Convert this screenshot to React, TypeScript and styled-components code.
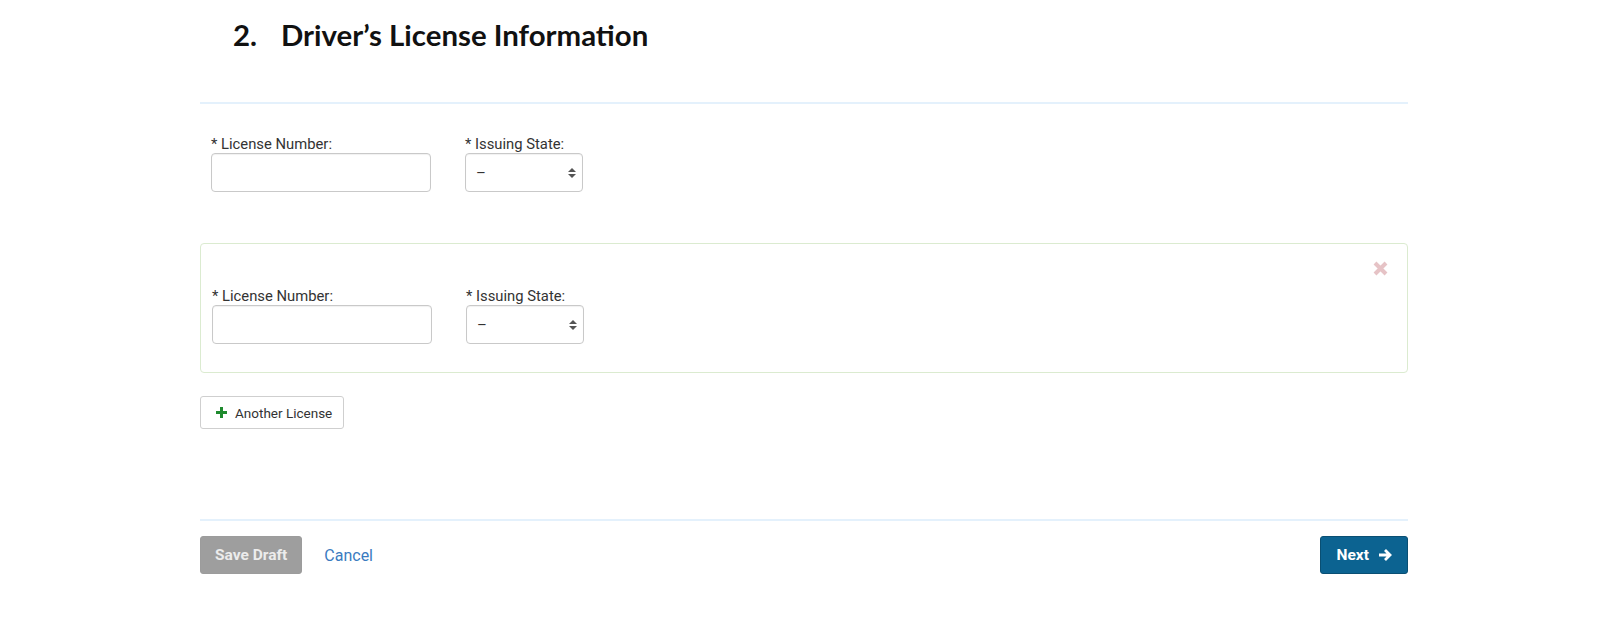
import React from 'react';
import styled, { createGlobalStyle } from 'styled-components';

const GlobalStyle = createGlobalStyle`
  body {
    margin: 0;
    background: #ffffff;
    font-family: Roboto, "Liberation Sans", Arial, sans-serif;
    color: #333;
  }
`;

const Page = styled.div`
  width: 1208px;
  margin-left: 200px;
  padding-top: 17px;
`;

const Title = styled.h2`
  margin: 0 0 49px 33px;
  font-family: Lato, "Open Sans", sans-serif;
  font-weight: 700;
  font-size: 29.4px;
  line-height: 36px;
  color: #111;
`;

const TitleNumber = styled.span`
  display: inline-block;
  width: 48px;
`;

const Divider = styled.hr`
  margin: 0;
  border: none;
  height: 2px;
  background: #e4f1fc;
`;

const Section = styled.div`
  padding: 32px 11px 0;
`;

const FieldRow = styled.div`
  display: flex;
  gap: 34px;
`;

const Field = styled.div`
  display: flex;
  flex-direction: column;
`;

const Label = styled.label`
  font-size: 14.8px;
  line-height: 17px;
  color: #333;
`;

const TextInput = styled.input`
  box-sizing: border-box;
  width: 220px;
  height: 39px;
  border: 1px solid #c9c9c9;
  border-radius: 4px;
  box-shadow: inset 0 1px 1px rgba(0, 0, 0, 0.06);
  font-family: inherit;
  font-size: 14px;
  padding: 0 10px;
`;

const SelectWrap = styled.div`
  position: relative;
  width: 118px;
`;

const Select = styled.select`
  box-sizing: border-box;
  width: 118px;
  height: 39px;
  border: 1px solid #c9c9c9;
  border-radius: 4px;
  box-shadow: inset 0 1px 1px rgba(0, 0, 0, 0.06);
  background: #fff;
  appearance: none;
  -webkit-appearance: none;
  font-family: inherit;
  font-size: 15px;
  color: #333;
  padding: 0 10px;
`;

const SelectArrows = styled.svg`
  position: absolute;
  right: 7px;
  top: 15px;
  pointer-events: none;
`;

const Card = styled.div`
  position: relative;
  margin-top: 51px;
  border: 1px solid #dbebd0;
  border-radius: 4px;
  padding: 44px 11px 28px;
`;

const RemoveButton = styled.button`
  position: absolute;
  top: 16px;
  right: 18px;
  padding: 0;
  border: none;
  background: none;
  cursor: pointer;
  line-height: 0;
`;

const AddButton = styled.button`
  margin-top: 23px;
  height: 33px;
  display: inline-flex;
  align-items: center;
  gap: 8px;
  padding: 0 11px 0 15px;
  background: #fff;
  border: 1px solid #cfcfcf;
  border-radius: 3px;
  font-family: inherit;
  font-size: 13.5px;
  color: #333;
  cursor: pointer;
`;

const Footer = styled.div`
  margin-top: 90px;
`;

const FooterRow = styled.div`
  display: flex;
  align-items: center;
  padding-top: 15px;
`;

const Button = styled.button<{ $primary?: boolean }>`
  height: 38px;
  display: inline-flex;
  align-items: center;
  gap: 9px;
  padding: ${(p) => (p.$primary ? '0 15px 0 16px' : '0 14px')};
  border-radius: 3px;
  border: 1px solid ${(p) => (p.$primary ? '#0a4f73' : '#9c9c9c')};
  background: ${(p) => (p.$primary ? '#0c6391' : '#9e9e9e')};
  color: ${(p) => (p.$primary ? '#ffffff' : '#ececec')};
  font-family: inherit;
  font-weight: 700;
  font-size: 15.5px;
  cursor: pointer;
`;

const LinkButton = styled.button`
  margin-left: 22px;
  background: none;
  border: none;
  padding: 0;
  font-family: inherit;
  font-size: 16px;
  color: #3a7bbf;
  cursor: pointer;
`;

const Spacer = styled.div`
  flex: 1;
`;

const Arrows = () => (
  <SelectArrows width="8" height="10" viewBox="0 0 8 10">
    <path d="M4 0 L8 4 L0 4 Z" fill="#555" />
    <path d="M0 6 L8 6 L4 10 Z" fill="#555" />
  </SelectArrows>
);

const LicenseFields: React.FC = () => (
  <FieldRow>
    <Field>
      <Label>* License Number:</Label>
      <TextInput type="text" />
    </Field>
    <Field>
      <Label>* Issuing State:</Label>
      <SelectWrap>
        <Select defaultValue="">
          <option value="">–</option>
        </Select>
        <Arrows />
      </SelectWrap>
    </Field>
  </FieldRow>
);

const App: React.FC = () => {
  return (
    <>
      <GlobalStyle />
      <Page>
        <Title>
          <TitleNumber>2.</TitleNumber>Driver’s License Information
        </Title>
        <Divider />
        <Section>
          <LicenseFields />
        </Section>
        <Card>
          <RemoveButton aria-label="Remove">
            <svg width="17" height="17" viewBox="0 0 17 17">
              <path d="M3 3 L14 14 M14 3 L3 14" stroke="#e6c3c6" strokeWidth="4" strokeLinecap="butt" />
            </svg>
          </RemoveButton>
          <LicenseFields />
        </Card>
        <AddButton>
          <svg width="11" height="11" viewBox="0 0 11 11">
            <path d="M5.5 0 V11 M0 5.5 H11" stroke="#1f8a2e" strokeWidth="3" />
          </svg>
          Another License
        </AddButton>
        <Footer>
          <Divider />
          <FooterRow>
            <Button>Save Draft</Button>
            <LinkButton>Cancel</LinkButton>
            <Spacer />
            <Button $primary>
              Next
              <svg width="14" height="14" viewBox="0 0 14 14">
                <path d="M1 7 H12 M7 2 L12 7 L7 12" stroke="#fff" strokeWidth="2.8" fill="none" />
              </svg>
            </Button>
          </FooterRow>
        </Footer>
      </Page>
    </>
  );
};

export default App;
